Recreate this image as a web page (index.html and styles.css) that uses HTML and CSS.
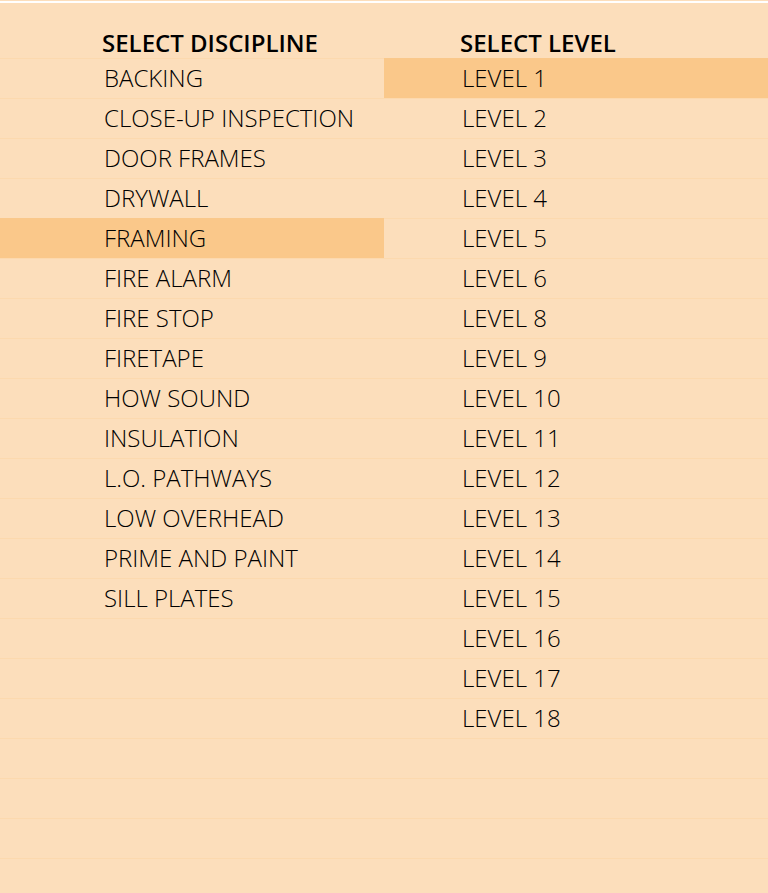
FILE: index.html
```html
<!DOCTYPE html>
<html lang="en">
<head>
<meta charset="utf-8">
<meta name="viewport" content="width=device-width, initial-scale=1">
<title>Select discipline and level</title>
<link rel="stylesheet" href="styles.css">
</head>
<body>
<main class="picker">
  <section class="column discipline">
    <h2 class="heading">SELECT DISCIPLINE</h2>
    <ul class="options">
      <li><button class="option">BACKING</button></li>
      <li><button class="option">CLOSE-UP INSPECTION</button></li>
      <li><button class="option">DOOR FRAMES</button></li>
      <li><button class="option">DRYWALL</button></li>
      <li><button class="option selected" aria-pressed="true">FRAMING</button></li>
      <li><button class="option">FIRE ALARM</button></li>
      <li><button class="option">FIRE STOP</button></li>
      <li><button class="option">FIRETAPE</button></li>
      <li><button class="option">HOW SOUND</button></li>
      <li><button class="option">INSULATION</button></li>
      <li><button class="option">L.O. PATHWAYS</button></li>
      <li><button class="option">LOW OVERHEAD</button></li>
      <li><button class="option">PRIME AND PAINT</button></li>
      <li><button class="option">SILL PLATES</button></li>
    </ul>
  </section>
  <section class="column level">
    <h2 class="heading">SELECT LEVEL</h2>
    <ul class="options">
      <li><button class="option selected" aria-pressed="true">LEVEL 1</button></li>
      <li><button class="option">LEVEL 2</button></li>
      <li><button class="option">LEVEL 3</button></li>
      <li><button class="option">LEVEL 4</button></li>
      <li><button class="option">LEVEL 5</button></li>
      <li><button class="option">LEVEL 6</button></li>
      <li><button class="option">LEVEL 8</button></li>
      <li><button class="option">LEVEL 9</button></li>
      <li><button class="option">LEVEL 10</button></li>
      <li><button class="option">LEVEL 11</button></li>
      <li><button class="option">LEVEL 12</button></li>
      <li><button class="option">LEVEL 13</button></li>
      <li><button class="option">LEVEL 14</button></li>
      <li><button class="option">LEVEL 15</button></li>
      <li><button class="option">LEVEL 16</button></li>
      <li><button class="option">LEVEL 17</button></li>
      <li><button class="option">LEVEL 18</button></li>
    </ul>
  </section>
</main>
</body>
</html>
```

FILE: styles.css
```css
* {
  box-sizing: border-box;
}

body {
  margin: 0;
  background: linear-gradient(#fcdebb 0 1px, #fff 1px 3px, #fcdebb 3px);
  color: #000;
  font-family: "Open Sans", "Noto Sans", sans-serif;
}

.picker {
  display: grid;
  grid-template-columns: 1fr 1fr;
  min-height: 100vh;
}

.column {
  display: flex;
  flex-direction: column;
}

.discipline {
  --inset: 104px;
}

.level {
  --inset: 78px;
}

.heading {
  margin: 0;
  padding: 28px 0 0 calc(var(--inset) - 2px);
  font-size: 24px;
  line-height: 30px;
  font-weight: 600;
  white-space: nowrap;
}

.options {
  flex: 1;
  margin: 0;
  padding: 0;
  list-style: none;
  background: repeating-linear-gradient(#fcd9ae 0 1px, #fcdebb 1px 40px);
}

.option {
  display: block;
  width: 100%;
  height: 40px;
  padding: 0 0 0 var(--inset);
  border: 0;
  background: none;
  color: inherit;
  font: 300 24px/40px "Open Sans", "Noto Sans", sans-serif;
  text-align: left;
  white-space: nowrap;
  cursor: pointer;
}

.selected {
  background: #fac88a;
}
```
